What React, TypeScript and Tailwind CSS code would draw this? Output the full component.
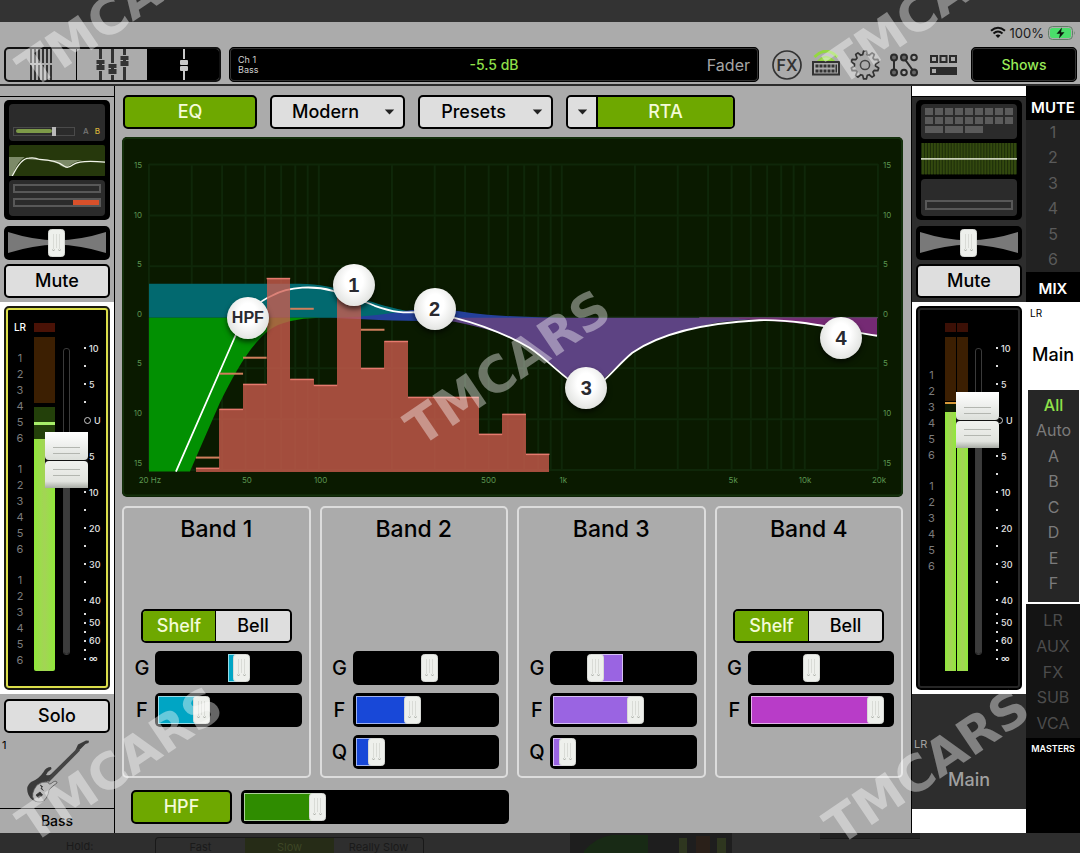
import React, { useState } from "react";

const BUTTON = "h-[34px] rounded-[5px] border-2 border-black text-lg leading-none font-medium";

/* ---------- shared controls ---------- */

function Grip() {
  return (
    <svg viewBox="0 0 17 28" preserveAspectRatio="none" className="block h-full w-full">
      <rect x="0.5" y="0.5" width="16" height="27" rx="3" fill="#eef0ec" stroke="#d8dad6" />
      <path d="M5.5 5v15M8.500 5v14M11.500 5v15" stroke="#d9dbd6" fill="none" />
      <path d="M4.500 20.500l1 1.500 1-1.500M10.500 20.500l1 1.500 1-1.500" stroke="#a9ada6" fill="none" />
    </svg>
  );
}

type SliderProps = { label: string; start: number; fill?: string; bipolar?: boolean };

function Slider({ label, start, fill, bipolar }: SliderProps) {
  const [value, setValue] = useState(start);
  const at = value / 1000;
  const thumb = `calc((100% - 17px) * ${at})`;
  const bar = !bipolar
    ? { left: "0", width: `calc((100% - 17px) * ${at} + 4px)` }
    : at > 0.5
      ? { left: "50%", width: `calc((100% - 17px) * ${at} + 4px - 50%)` }
      : { left: `calc((100% - 17px) * ${at} + 12px)`, width: `calc(50% - (100% - 17px) * ${at} - 12px)` };
  return (
    <div className="h-[34px] min-w-0 flex-1 rounded-[5px] bg-black p-[3px]">
      <div className="relative h-full">
        {fill && <div className={`absolute inset-y-0 border border-white/60 ${fill}`} style={bar} />}
        <div className="absolute inset-y-0 w-[17px]" style={{ left: thumb }}>
          <Grip />
        </div>
        <input
          type="range"
          min={0}
          max={1000}
          value={value}
          onChange={(e) => setValue(Number(e.target.value))}
          aria-label={label}
          className="absolute inset-0 h-full w-full cursor-pointer opacity-0"
        />
      </div>
    </div>
  );
}

function Pan({ label }: { label: string }) {
  const [value, setValue] = useState(490);
  return (
    <div className="h-[34px] rounded-[5px] bg-black px-1 py-[3px]">
      <div className="relative h-full">
        <svg viewBox="0 0 97 28" preserveAspectRatio="none" className="absolute inset-0 h-full w-full">
          <path d="M0 3Q25 11 48 11.500Q72 11 97 3V24Q72 16 48 15.500Q25 16 0 24Z" fill="#797979" />
        </svg>
        <div className="absolute inset-y-0 w-[17px]" style={{ left: `calc((100% - 17px) * ${value / 1000})` }}>
          <Grip />
        </div>
        <input
          type="range"
          min={0}
          max={1000}
          value={value}
          onChange={(e) => setValue(Number(e.target.value))}
          aria-label={label}
          className="absolute inset-0 h-full w-full cursor-pointer opacity-0"
        />
      </div>
    </div>
  );
}

function Caret() {
  return (
    <svg viewBox="0 0 12 7" className="h-[6px] w-[11px]">
      <path d="M0.500 0.500h11L6 6.500z" fill="#222" />
    </svg>
  );
}

function Dropdown({ label, options }: { label: string; options: string[] }) {
  return (
    <div className="relative w-[135px]">
      <select aria-label={label} className={`${BUTTON} w-full appearance-none bg-[#dedede] pr-6 text-center text-black`}>
        {options.map((o) => (
          <option key={o}>{o}</option>
        ))}
      </select>
      <span className="pointer-events-none absolute inset-y-0 right-[10px] flex items-center">
        <Caret />
      </span>
    </div>
  );
}

/* ---------- top bar icons ---------- */

function GridFaders() {
  return (
    <svg viewBox="0 0 24 32" className="h-8 w-6">
      {[1, 5, 9, 13, 17, 21].map((x) => (
        <rect key={x} x={x} y="0" width="2" height="31" fill="#333" />
      ))}
      <rect x="0" y="14" width="24" height="2" fill="#ababab" />
    </svg>
  );
}

function ThreeFaders() {
  return (
    <svg viewBox="0 0 34 32" className="h-8 w-[34px]">
      {[[5, 16], [17, 20], [29, 12]].map(([x, y]) => (
        <g key={x} fill="#333">
          <rect x={x - 1} y="0" width="3" height="31" />
          <rect x={x - 4} y={y - 6} width="9" height="12" fill="#ababab" />
          <rect x={x - 3.5} y={y - 5} width="8" height="4" />
          <rect x={x - 3.5} y={y} width="8" height="5" />
          <rect x={x - 1} y={y - 1} width="3" height="1" />
        </g>
      ))}
    </svg>
  );
}

function OneFader() {
  return (
    <svg viewBox="0 0 10 32" className="h-8 w-[10px]">
      <rect x="4" y="0" width="2" height="31" fill="#c9c9c9" />
      <rect x="0" y="10" width="10" height="12" fill="#000" />
      <rect x="1" y="11" width="8" height="5" rx="1" fill="#c9c9c9" />
      <rect x="1" y="17" width="8" height="5" rx="1" fill="#c9c9c9" />
    </svg>
  );
}

function FxIcon() {
  return (
    <svg viewBox="0 0 30 30" className="h-[30px] w-[30px]">
      <circle cx="15" cy="15" r="14" fill="none" stroke="#333" strokeWidth="1.700" />
      <text x="15" y="21" textAnchor="middle" fontFamily="Inter, sans-serif" fontSize="16" fontWeight="600" fill="#333">
        FX
      </text>
    </svg>
  );
}

function MixerIcon() {
  return (
    <svg viewBox="0 0 30 30" className="h-[30px] w-[30px]">
      <path d="M3.500 7Q15-4.500 26.500 7" fill="none" stroke="#93d840" strokeWidth="3" />
      <path d="M7.500 10.500Q15 3 22.500 10.500Z" fill="#a5d86a" stroke="#93d840" strokeWidth="1.500" />
      <rect x="2" y="12" width="26" height="12.500" fill="none" stroke="#333" strokeWidth="2" />
      {[4.500, 8.500, 12.500, 16.500, 20.500].map((x) => (
        <g key={x} fill="#333">
          <rect x={x} y="14.500" width="3" height="3" />
          <rect x={x} y="19.500" width="3" height="3" />
        </g>
      ))}
      <rect x="24.500" y="14.500" width="1.500" height="8" fill="#333" />
    </svg>
  );
}

function gearPath() {
  const pts: string[] = [];
  const teeth = 10;
  for (let i = 0; i < teeth; i++) {
    const base = (i / teeth) * Math.PI * 2 - Math.PI / 2;
    [[-0.22, 10.6], [-0.1, 14], [0.1, 14], [0.22, 10.6]].forEach(([a, r]) => {
      pts.push(`${(15 + Math.cos(base + a) * r).toFixed(2)} ${(15 + Math.sin(base + a) * r).toFixed(2)}`);
    });
  }
  return `M${pts.join("L")}Z`;
}

function GearIcon() {
  return (
    <svg viewBox="0 0 30 30" className="h-[30px] w-[30px]">
      <path d={gearPath()} fill="none" stroke="#333" strokeWidth="1.700" strokeLinejoin="round" />
      <circle cx="15" cy="15" r="4.600" fill="none" stroke="#444" strokeWidth="1.500" />
    </svg>
  );
}

function RoutingIcon() {
  return (
    <svg viewBox="0 0 30 30" className="h-[30px] w-[30px]" stroke="#2b2b2b" strokeWidth="2">
      <path d="M5 8V22M15 8L25 22" />
      <circle cx="5" cy="7.500" r="3" fill="#666" />
      <circle cx="15" cy="7.500" r="3" fill="#666" />
      <circle cx="25" cy="7.500" r="2.800" fill="#ababab" />
      <circle cx="5" cy="22.500" r="3" fill="#666" />
      <circle cx="15" cy="22.500" r="2.800" fill="#ababab" />
      <circle cx="25" cy="22.500" r="3" fill="#666" />
    </svg>
  );
}

function LayoutIcon() {
  return (
    <svg viewBox="0 0 30 30" className="h-[30px] w-[30px]">
      <g fill="none" stroke="#2b2b2b" strokeWidth="2">
        <rect x="3" y="6" width="6" height="6" />
        <rect x="12.500" y="6" width="6" height="6" />
        <rect x="22" y="6" width="6" height="6" />
      </g>
      <rect x="2" y="17" width="27" height="8" fill="#2b2b2b" />
      <rect x="4" y="19" width="4" height="4" fill="#ababab" />
    </svg>
  );
}

function TopBar() {
  const tools: [string, () => React.JSX.Element][] = [
    ["Effects", FxIcon],
    ["Mixer connection", MixerIcon],
    ["Settings", GearIcon],
    ["Routing", RoutingIcon],
    ["Layout", LayoutIcon],
  ];
  return (
    <header className="border-b-2 border-[#2b2b2b] bg-[#ababab]">
      <div className="flex h-[25px] items-start justify-end gap-1 pt-1 pr-1 text-[#1a1a1a]">
        <svg viewBox="0 0 16 12" className="h-[13px] w-4" fill="none" stroke="#111" strokeWidth="2">
          <path d="M1 4.300Q8-1.800 15 4.300M3.500 7Q8 3 12.500 7" />
          <path d="M8 11.500L5.500 8.900Q8 7 10.500 8.900Z" fill="#111" stroke="none" />
        </svg>
        <span className="text-[13px] leading-[14px]">100%</span>
        <svg viewBox="0 0 28 14" className="h-[14px] w-7">
          <rect x="0.500" y="0.500" width="24" height="13" rx="4" fill="none" stroke="#5f7f66" />
          <rect x="2" y="2" width="21" height="10" rx="2.500" fill="#4ade6a" />
          <path d="M14 1.500L8.500 7.700h3.500L11 12.500L16.500 6.300H13Z" fill="#0c1a0e" />
          <path d="M26 5q1.500 2 0 4z" fill="#5f7f66" />
        </svg>
      </div>
      <div className="flex h-[37px] items-start pr-[3px] pl-1">
        <div className="grid h-[35px] w-[217px] grid-cols-3 divide-x divide-black overflow-hidden rounded-[5px] border-2 border-[#111]">
          <button aria-label="Overview" className="flex items-center justify-center"><GridFaders /></button>
          <button aria-label="Mixer" className="flex items-center justify-center"><ThreeFaders /></button>
          <button aria-label="Channel" className="flex items-center justify-center bg-black"><OneFader /></button>
        </div>
        <div className="ml-2 grid h-[35px] flex-1 grid-cols-3 items-center rounded-[5px] border-2 border-[#333] bg-black px-[7px] outline-1 -outline-offset-1 outline-black">
          <div className="text-[9px] leading-[10px] text-[#d0d0d0]">
            Ch 1<br />Bass
          </div>
          <div className="text-center text-sm font-medium text-[#8fe04a]">-5.5 dB</div>
          <div className="text-right text-base text-[#a6a6a6]">Fader</div>
        </div>
        <nav className="mx-[13px] flex h-[35px] items-center gap-[9px]">
          {tools.map(([name, Icon]) => (
            <button key={name} aria-label={name}><Icon /></button>
          ))}
        </nav>
        <button className="h-[35px] w-[106px] rounded-[5px] border-2 border-[#333] bg-black text-sm font-medium text-[#98ea58] outline-1 -outline-offset-1 outline-black">
          Shows
        </button>
      </div>
    </header>
  );
}

/* ---------- channel strips ---------- */

function Thumb() {
  return (
    <svg viewBox="0 0 43 57" className="block h-[57px] w-[43px]">
      <defs>
        <linearGradient id="capTop" x1="0" x2="0" y1="0" y2="1">
          <stop offset="0" stopColor="#fff" />
          <stop offset="1" stopColor="#dcdfda" />
        </linearGradient>
        <linearGradient id="capLow" x1="0" x2="0" y1="0" y2="1">
          <stop offset="0" stopColor="#f0f1ee" />
          <stop offset="0.750" stopColor="#e2e4df" />
          <stop offset="1" stopColor="#a9aca6" />
        </linearGradient>
      </defs>
      <rect y="24" width="43" height="10" fill="#111" />
      <path d="M0 0H43V24Q43 28 39 28H4Q0 28 0 24Z" fill="url(#capTop)" />
      <path d="M4 29H39Q43 29 43 33V56H0V33Q0 29 4 29Z" fill="url(#capLow)" />
      <path d="M8 15.500H35M8 21.500H35M8 37.500H35M8 43.500H35" stroke="#b3b6b0" />
    </svg>
  );
}

const SCALE = ["10", "", "5", "", "U", "", "5", "", "10", "", "20", "", "30", "", "40"];
const SCALE_LOW = ["", "50", "", "60", "", "∞"];

function Scale() {
  const mark = (t: string) =>
    t === "U" ? (
      <>
        <span className="h-[7px] w-[7px] rounded-full border border-[#ccc]" />
        <span className="ml-[3px]">U</span>
      </>
    ) : (
      <>
        <span className="h-[2px] w-[2px] shrink-0 bg-[#ddd]" />
        <span className="ml-[3px]">{t}</span>
      </>
    );
  return (
    <div className="flex flex-col text-[9px] leading-none font-medium text-[#e4e4e4]">
      {SCALE.map((t, i) => (
        <div key={i} className="flex h-[18px] items-center">{mark(t)}</div>
      ))}
      {SCALE_LOW.map((t, i) => (
        <div key={i} className="flex h-[9px] items-center">{mark(t)}</div>
      ))}
    </div>
  );
}

function Labels({ groups, head, className }: { groups: number; head?: string; className: string }) {
  return (
    <div className={`flex flex-col gap-[15px] text-center text-[11px] leading-4 text-[#7c7c7c] ${className}`}>
      <div className="h-4 text-[10px] font-medium text-white">{head}</div>
      {Array.from({ length: groups }, (_, g) => (
        <div key={g}>
          {[1, 2, 3, 4, 5, 6].map((n) => (
            <div key={n}>{n}</div>
          ))}
        </div>
      ))}
    </div>
  );
}

function Track() {
  return (
    <div className="mt-10 mb-[33px] flex w-[7px] flex-col rounded-[3px] border border-[#3a3a3a]">
      <div className="h-[90px]" />
      <div className="flex-1 rounded-b-[3px] bg-[#3c3c3c]" />
    </div>
  );
}

function LevelInput({ label, start }: { label: string; start: number }) {
  return (
    <input
      type="range"
      defaultValue={start}
      aria-label={label}
      className="absolute inset-y-0 right-0 w-1/2 cursor-pointer opacity-0 [writing-mode:vertical-lr]"
    />
  );
}

function ChannelStrip() {
  return (
    <aside className="flex w-[115px] shrink-0 flex-col border-r border-black bg-[#ababab]">
      <div className="h-[11px] border-b border-black" />
      <div className="flex flex-col px-1 pt-[3px] pb-1">
        <div className="flex h-[120px] flex-col gap-1 rounded-[5px] bg-black px-[5px] py-1">
          <div className="flex flex-1 items-end gap-2 rounded bg-[#2b2b2b] px-1 pb-[5px]">
            <div className="flex h-[9px] w-[62px] items-center border border-[#4a4a4a] px-[2px]">
              <div className="h-1 w-[36px] rounded-sm bg-[#7d9a48]" />
              <div className="h-[9px] w-1 bg-[#b9b9b9]" />
            </div>
            <div className="flex gap-[6px] text-[8px] leading-[9px] font-medium">
              <span className="text-[#777]">A</span>
              <span className="text-[#d6b03a]">B</span>
            </div>
          </div>
          <svg viewBox="0 0 97 34" preserveAspectRatio="none" className="min-h-0 w-full flex-1">
            <rect width="97" height="34" rx="2" fill="#26380c" />
            <path d="M0 13H16Q8 18 3 34H0Z M16 15Q24 13 32 16H74Q66 18 60 23Q56 26 50 20Q40 16 30 16Z" fill="#7c8a68" />
            <path d="M3 34Q12 14 20 14Q26 13 31 15.500Q48 16 57 23.500Q60 25 65 21Q72 16 97 18.500" fill="none" stroke="#f2f5ea" strokeWidth="1.300" />
          </svg>
          <div className="flex flex-1 flex-col gap-[5px] rounded bg-[#2b2b2b] px-1 pt-1">
            <div className="h-[9px] border-2 border-[#585858]" />
            <div className="flex h-[9px] justify-end border-2 border-[#585858]">
              <div className="w-[26px] bg-[#d8502a]" />
            </div>
          </div>
        </div>
        <div className="pt-[6px] pb-1"><Pan label="Bass pan" /></div>
        <button className={`${BUTTON} bg-[#dedede]`}>Mute</button>
      </div>
      <div className="flex flex-1 flex-col bg-white p-1">
        <div className="relative flex flex-1 rounded-[5px] border-2 border-[#1c1c10] bg-black outline-2 -outline-offset-4 outline-[#dcdf4a]">
          <Labels groups={3} head="LR" className="w-[28px] pt-[11px]" />
          <div className="flex w-[21px] flex-col pt-[15px] pb-[17px]">
            <div className="h-[9px] bg-[#4a1206]" />
            <div className="mt-[5px] h-[66px] bg-[#3c1f02]" />
            <div className="mt-1 h-8 bg-[#23400a] pt-[15px]">
              <div className="h-[3px] bg-[#a8ee6a]" />
            </div>
            <div className="flex-1 rounded-b-[2px] bg-[#9bdb4c] bg-linear-to-r from-[#8fe838] via-[#a3d455] to-[#8fe838]" />
          </div>
          <div className="ml-2 flex"><Track /></div>
          <div className="mt-[31px] ml-[14px]"><Scale /></div>
          <div className="absolute top-[124px] left-[39px]"><Thumb /></div>
          <LevelInput label="Bass level" start={58} />
        </div>
      </div>
      <div className="flex flex-col px-1 pt-[5px]">
        <button className={`${BUTTON} bg-[#dedede]`}>Solo</button>
      </div>
      <div className="flex h-[76px] items-start border-b border-black pt-1">
        <span className="w-6 pl-[2px] text-[11px] leading-4">1</span>
        <svg viewBox="24 738 66 66" className="h-[66px] w-[66px]">
          <path d="M75.500 751L78 745.500L86 741.500L89 741.800L88.500 744L85.500 745L80 750.500L77 752Z" fill="#3a3a3a" />
          <path d="M77.500 749L46 780L49 783L80 751.500Z" fill="#444" />
          <path d="M51 768Q46 768 43.500 773Q39 780 31 783Q26 787 27.500 793Q29 800 36 803Q31 795 36 788Q42 783 47 783L52 775Q49 777 46 776Q48 772 51.500 770Z" fill="#3a3a3a" />
          <path d="M37 786Q42 782 48 783Q49 787 53 783Q57 781 57 784Q52 787 49 791Q48 799 43 802.500Q37 804 34 801Q30 795 37 786Z" fill="#bcbcbc" stroke="#555" strokeWidth="0.800" />
          <path d="M40 786l2.500 1.500-1.500 2 2.500 2M36 796l4-3 2.500 3-4 3z" fill="#333" stroke="#333" strokeWidth="0.800" />
        </svg>
      </div>
      <div className="flex h-6 items-center justify-center text-sm font-medium">Bass</div>
    </aside>
  );
}

function MainMeter({ peak }: { peak: boolean }) {
  return (
    <div className="flex w-[11px] flex-col pt-[15px] pb-[17px]">
      <div className="h-[9px] bg-[#3c1006]" />
      <div className="mt-[5px] h-[64px] bg-[#3c1f02]" />
      <div className={`mt-px h-[2px] ${peak ? "bg-[#d89a3a]" : "bg-[#3c1f02]"}`} />
      <div className="h-2 bg-[#0d1a04]" />
      <div className="flex-1 bg-[#9bdb4c] bg-linear-to-r from-[#8fe838] via-[#a3d455] to-[#8fe838]" />
    </div>
  );
}

function MainStrip() {
  return (
    <aside className="flex w-[115px] shrink-0 flex-col border-l border-black bg-[#2d2d2d]">
      <div className="h-[11px] border-b border-black bg-white" />
      <div className="flex flex-col px-1 pt-[3px] pb-1">
        <div className="flex h-[120px] flex-col gap-1 rounded-[5px] bg-black px-[5px] py-1">
          <div className="flex flex-1 flex-col gap-[2px] rounded bg-[#2b2b2b] px-1 pt-1">
            {[0, 1].map((r) => (
              <div key={r} className="grid grid-cols-9 gap-[2px]">
                {Array.from({ length: 9 }, (_, i) => (
                  <div key={i} className="h-[7px] bg-[#5b5b5b]" />
                ))}
              </div>
            ))}
            <div className="flex gap-[2px]">
              <div className="h-[7px] w-[18px] bg-[#5b5b5b]" />
              <div className="h-[7px] w-[18px] bg-[#5b5b5b]" />
              <div className="h-[7px] w-[18px] bg-[#5b5b5b]" />
            </div>
          </div>
          <svg viewBox="0 0 97 34" preserveAspectRatio="none" className="min-h-0 w-full flex-1">
            <rect width="97" height="34" fill="#1c2c0a" />
            {Array.from({ length: 32 }, (_, i) => (
              <rect key={i} x={i * 3 + 1} y="0" width="2" height="34" fill="#33490f" />
            ))}
            <rect y="16.500" width="97" height="1.500" fill="#eef3e0" />
          </svg>
          <div className="flex flex-1 flex-col justify-end rounded bg-[#2b2b2b] px-1 pb-[6px]">
            <div className="h-[10px] border-2 border-[#585858]" />
          </div>
        </div>
        <div className="pt-[6px] pb-1"><Pan label="Main balance" /></div>
        <button className={`${BUTTON} bg-[#dedede]`}>Mute</button>
      </div>
      <div className="flex flex-1 flex-col bg-white p-1">
        <div className="relative flex flex-1 rounded-[5px] border-2 border-black bg-black outline-2 -outline-offset-4 outline-[#262626]">
          <div className="mt-4"><Labels groups={2} className="w-[27px] pt-[12px]" /></div>
          <div className="flex gap-px">
            <MainMeter peak />
            <MainMeter peak={false} />
          </div>
          <div className="ml-[7px] flex"><Track /></div>
          <div className="mt-[31px] ml-[14px]"><Scale /></div>
          <div className="absolute top-[84px] left-[38px]"><Thumb /></div>
          <LevelInput label="Main level" start={72} />
        </div>
      </div>
      <div className="flex h-[115px] flex-col pt-[42px] text-[#a0a0a0]">
        <span className="pl-[2px] text-[11px] leading-4">LR</span>
        <span className="pt-[14px] text-center text-lg font-medium">Main</span>
      </div>
      <div className="h-6 bg-white" />
    </aside>
  );
}

function NavList({ items, active, className }: { items: string[]; active?: string; className: string }) {
  return (
    <ul className={`flex flex-col justify-between text-center text-base leading-[25px] ${className}`}>
      {items.map((t) => (
        <li key={t}>
          <button className={t === active ? "font-medium text-[#8fe04a]" : ""}>{t}</button>
        </li>
      ))}
    </ul>
  );
}

function SideNav() {
  return (
    <nav className="flex w-[54px] shrink-0 flex-col bg-black" aria-label="Groups">
      <div className="h-[34px] pt-[11px] text-center text-[15px] leading-[22px] font-semibold text-white">MUTE</div>
      <NavList items={["1", "2", "3", "4", "5", "6"]} className="h-[152px] bg-[#222] text-[#5a5a5a]" />
      <div className="h-[30px] pt-[6px] text-center text-[15px] leading-[22px] font-semibold text-white">MIX</div>
      <div className="flex h-[88px] flex-col bg-white">
        <span className="pt-[3px] pl-1 text-[10px] leading-4">LR</span>
        <span className="pt-[20px] text-center text-lg font-medium">Main</span>
      </div>
      <div className="border-r border-b-2 border-l-2 border-white">
        <NavList items={["All", "Auto", "A", "B", "C", "D", "E", "F"]} active="All" className="h-[212px] bg-[#262626] pt-[3px] pb-[6px] text-[#7b7b7b]" />
      </div>
      <NavList items={["LR", "AUX", "FX", "SUB", "VCA"]} className="h-[134px] bg-[#141414] pt-1 pb-[2px] text-[#4c4c4c]" />
      <div className="pt-[3px] text-center text-[9px] leading-4 font-semibold text-white">MASTERS</div>
    </nav>
  );
}

/* ---------- EQ graph ---------- */

const DECADE = 243.3;
const freqX = (f: number) => 149 + Math.log10(f / 20) * DECADE;
const FREQS = [20, 30, 40, 50, 60, 70, 80, 90, 100, 200, 300, 400, 500, 600, 700, 800, 900, 1000, 2000, 3000, 4000, 5000, 6000, 7000, 8000, 9000, 10000, 20000];
const FREQ_LABELS: [number, string][] = [[150, "20 Hz"], [247, "50"], [321, "100"], [489, "500"], [564, "1k"], [734, "5k"], [806, "10k"], [880, "20k"]];
const DB = ["15", "10", "5", "0", "5", "10", "15"];
const BAR_TOPS = [468, 409, 384, 278, 379, 385, 292, 368, 341, 397, 397, 397, 434, 414, 454];
const PEAKS: [number, number][] = [[0, 457], [1, 373], [2, 357], [4, 308], [7, 329]];
const HANDLES = [
  { t: "HPF", x: 248, y: 318 },
  { t: "1", x: 354, y: 285 },
  { t: "2", x: 435, y: 309 },
  { t: "3", x: 587, y: 388 },
  { t: "4", x: 842, y: 338 },
];

function EqGraph() {
  return (
    <section className="relative mt-2 overflow-hidden rounded-[5px] bg-[#081800]">
      <svg viewBox="122 137 782 360" className="block h-auto w-full" fontFamily="Inter, sans-serif">
        <rect x="123" y="138" width="780" height="358" rx="4" fill="#0a1a00" stroke="#14300c" strokeWidth="2" />
        <g stroke="#0f2709" strokeWidth="2">
          {FREQS.map((f) => (
            <line key={f} x1={freqX(f)} x2={freqX(f)} y1="164" y2="470" />
          ))}
          {DB.map((_, i) => (
            <line key={i} x1="149" x2="879" y1={164.5 + i * 51} y2={164.5 + i * 51} />
          ))}
        </g>
        <path d="M149 284H300Q330 285 345 292C375 304 400 313 460 318H149Z" fill="#02696f" />
        <path d="M149 318H320Q285 319 270 330C250 345 235 373 220 403L190 472H149Z" fill="#029002" />
        <path d="M330 318Q430 323 470 321Q550 318 560 318Q500 317 470 313Q430 306 395 313Q360 318 330 318Z" fill="#24409a" />
        <path d="M430 318H800Q740 319 713 324C690 329 655 338 633 353C620 364 600 384 587 394C575 386 557 366 530 348Q500 328 430 318Z" fill="#5d4383" />
        <path d="M740 318H878V336Q830 324 740 319Z" fill="#752a74" />
        <path d="M700 318H879" stroke="#6a4a72" />
        <path d="M176 472L236 335C246 313 258 302 272 296C290 286 315 286 333 291C350 295 362 301 375 306C395 313 405 313 415 312.500C430 312 442 315 455 318C475 323 502 332 530 348C550 361 565 380 587 392C606 384 615 368 633 353C655 338 690 324 760 320.500C800 319 840 330 878 336" fill="none" stroke="#fff" strokeWidth="1.800" />
        {BAR_TOPS.map((y, i) => {
          const x = 196 + i * 23.6;
          return (
            <g key={i}>
              <rect x={x} y={y} width="23.600" height={472 - y} fill="#d25c50" fillOpacity="0.770" shapeRendering="crispEdges" />
              <rect x={x} y={y} width="23.600" height="1.500" fill="#e57a6e" />
            </g>
          );
        })}
        {PEAKS.map(([i, y]) => (
          <rect key={i} x={196 + i * 23.6} y={y} width="23.600" height="2" fill="#cf7f5c" />
        ))}
        <g fontSize="8" fill="#5c9650">
          {DB.map((t, i) => (
            <React.Fragment key={i}>
              <text x="142" y={168 + i * 49.7} textAnchor="end">{t}</text>
              <text x="884" y={168 + i * 49.7}>{t}</text>
            </React.Fragment>
          ))}
          {FREQ_LABELS.map(([x, t]) => (
            <text key={t} x={x} y="483" textAnchor="middle">{t}</text>
          ))}
        </g>
      </svg>
      {HANDLES.map((h) => (
        <button
          key={h.t}
          aria-label={`Band handle ${h.t}`}
          className={`absolute flex h-[42px] w-[42px] -translate-x-1/2 -translate-y-1/2 items-center justify-center rounded-full bg-radial-[at_50%_40%] from-white from-30% to-[#d0d2ce] font-["Liberation_Sans",Arial,sans-serif] font-bold text-[#2a2a30] shadow-[0_3px_5px_rgba(0,0,0,0.6)] ${h.t === "HPF" ? "text-base" : "text-xl"}`}
          style={{ left: `${((h.x - 122) / 782) * 100}%`, top: `${((h.y - 137) / 360) * 100}%` }}
        >
          {h.t}
        </button>
      ))}
    </section>
  );
}

/* ---------- bands ---------- */

type Param = { name: string; start: number };
type BandData = { n: number; fill: string; shelf: boolean; params: Param[] };

const BANDS: BandData[] = [
  { n: 1, fill: "bg-[#00a5c4]", shelf: true, params: [{ name: "G", start: 609 }, { name: "F", start: 286 }] },
  { n: 2, fill: "bg-[#1848d8]", shelf: false, params: [{ name: "G", start: 528 }, { name: "F", start: 391 }, { name: "Q", start: 98 }] },
  { n: 3, fill: "bg-[#9a64e2]", shelf: false, params: [{ name: "G", start: 274 }, { name: "F", start: 599 }, { name: "Q", start: 48 }] },
  { n: 4, fill: "bg-[#b83cc8]", shelf: true, params: [{ name: "G", start: 427 }, { name: "F", start: 943 }] },
];

function Band({ n, fill, shelf, params }: BandData) {
  return (
    <section className="flex h-[272px] flex-col rounded-[5px] border-2 border-[#dcdcdc] px-[7px]">
      <h2 className="pt-[5px] text-center text-[23px] leading-8 font-medium">Band {n}</h2>
      <div className="mt-[64px] flex h-[34px] justify-center">
        {shelf && (
          <div className="grid w-[151px] grid-cols-2 overflow-hidden rounded-[5px] border-2 border-black text-lg leading-none font-medium">
            <button className="border-r border-black bg-[#6ea800] text-[#f4fbd8]">Shelf</button>
            <button className="bg-[#dedede]">Bell</button>
          </div>
        )}
      </div>
      <div className="mt-2 flex flex-col gap-2">
        {params.map((p) => (
          <div key={p.name} className="flex items-center">
            <span className="w-6 pr-[2px] text-center text-xl leading-none font-medium">{p.name}</span>
            <Slider
              label={`Band ${n} ${p.name}`}
              start={p.start}
              bipolar={p.name === "G"}
              fill={p.name === "G" && (n === 2 || n === 4) ? undefined : fill}
            />
          </div>
        ))}
      </div>
    </section>
  );
}

function EqPanel() {
  return (
    <main className="min-w-0 flex-1 bg-[#ababab] pt-[9px] pr-2 pb-2 pl-[7px]">
      <div className="flex gap-[13px] pl-px">
        <button className={`${BUTTON} w-[134px] bg-[#6ea800] text-[#f4fbd8]`}>EQ</button>
        <Dropdown label="EQ type" options={["Modern", "Vintage"]} />
        <Dropdown label="Presets" options={["Presets"]} />
        <div className="flex h-[34px] w-[169px] overflow-hidden rounded-[5px] border-2 border-black">
          <button aria-label="RTA options" className="flex w-[30px] items-center justify-center border-r-2 border-black bg-[#dedede]">
            <Caret />
          </button>
          <button className="flex-1 bg-[#6ea800] text-lg leading-none font-medium text-[#f4fbd8]">RTA</button>
        </div>
      </div>
      <EqGraph />
      <div className="mt-[9px] grid grid-cols-4 gap-[9px]">
        {BANDS.map((b) => (
          <Band key={b.n} {...b} />
        ))}
      </div>
      <div className="flex pt-3 pl-[9px]">
        <button className={`${BUTTON} w-[101px] bg-[#6ea800] text-[#f4fbd8]`}>HPF</button>
        <div className="ml-[9px] flex w-[268px]">
          <Slider label="High pass frequency" start={265} fill="bg-[#2f8c00]" />
        </div>
      </div>
    </main>
  );
}

/* ---------- dimmed strip under the panel ---------- */

function DimFooter() {
  return (
    <footer className="flex h-5 items-start overflow-hidden bg-[#2e2e2e] text-[11px] leading-[18px] text-[#1a1a1a]">
      <div className="w-[155px] pt-1 pl-[66px]">Hold:</div>
      <div className="mt-1 grid h-5 w-[269px] grid-cols-3 rounded-t border border-b-0 border-[#191919] text-center">
        <span>Fast</span>
        <span className="bg-[#262c17] text-[#3d4625]">Slow</span>
        <span>Really Slow</span>
      </div>
      <svg viewBox="0 0 162 20" className="ml-[146px] h-5 w-[162px]">
        <rect width="162" height="20" fill="#1e1e1e" />
        <path d="M14 18Q26 4 42 2H78V20H14Z" fill="#182a15" />
        <path d="M109 5h8v15h-8zM147 5h9v15h-9z" fill="#2e361f" />
        <path d="M126 3h14v17h-14z" fill="#2a2019" />
      </svg>
      <div className="ml-[88px] h-[6px] w-[100px] border-b border-[#191919] bg-[#222]" />
    </footer>
  );
}

const MARKS = [
  "left-[120px] top-[10px]",
  "left-[929px] top-[7px]",
  "left-[508px] top-[368px]",
  "left-[120px] top-[765px]",
  "left-[927px] top-[767px]",
];

export default function App() {
  return (
    <div className="relative flex min-h-screen flex-col overflow-hidden bg-[#333] font-[Inter,'Noto_Sans',sans-serif] text-black">
      <div className="h-[22px] shrink-0" />
      <TopBar />
      <div className="flex flex-1">
        <ChannelStrip />
        <EqPanel />
        <MainStrip />
        <SideNav />
      </div>
      <DimFooter />
      {MARKS.map((m) => (
        <div
          key={m}
          className={`pointer-events-none absolute -translate-x-1/2 -translate-y-1/2 -rotate-34 font-["DejaVu_Sans",sans-serif] text-[50px] leading-none font-bold text-white/40 ${m}`}
        >
          TMCARS
        </div>
      ))}
    </div>
  );
}
